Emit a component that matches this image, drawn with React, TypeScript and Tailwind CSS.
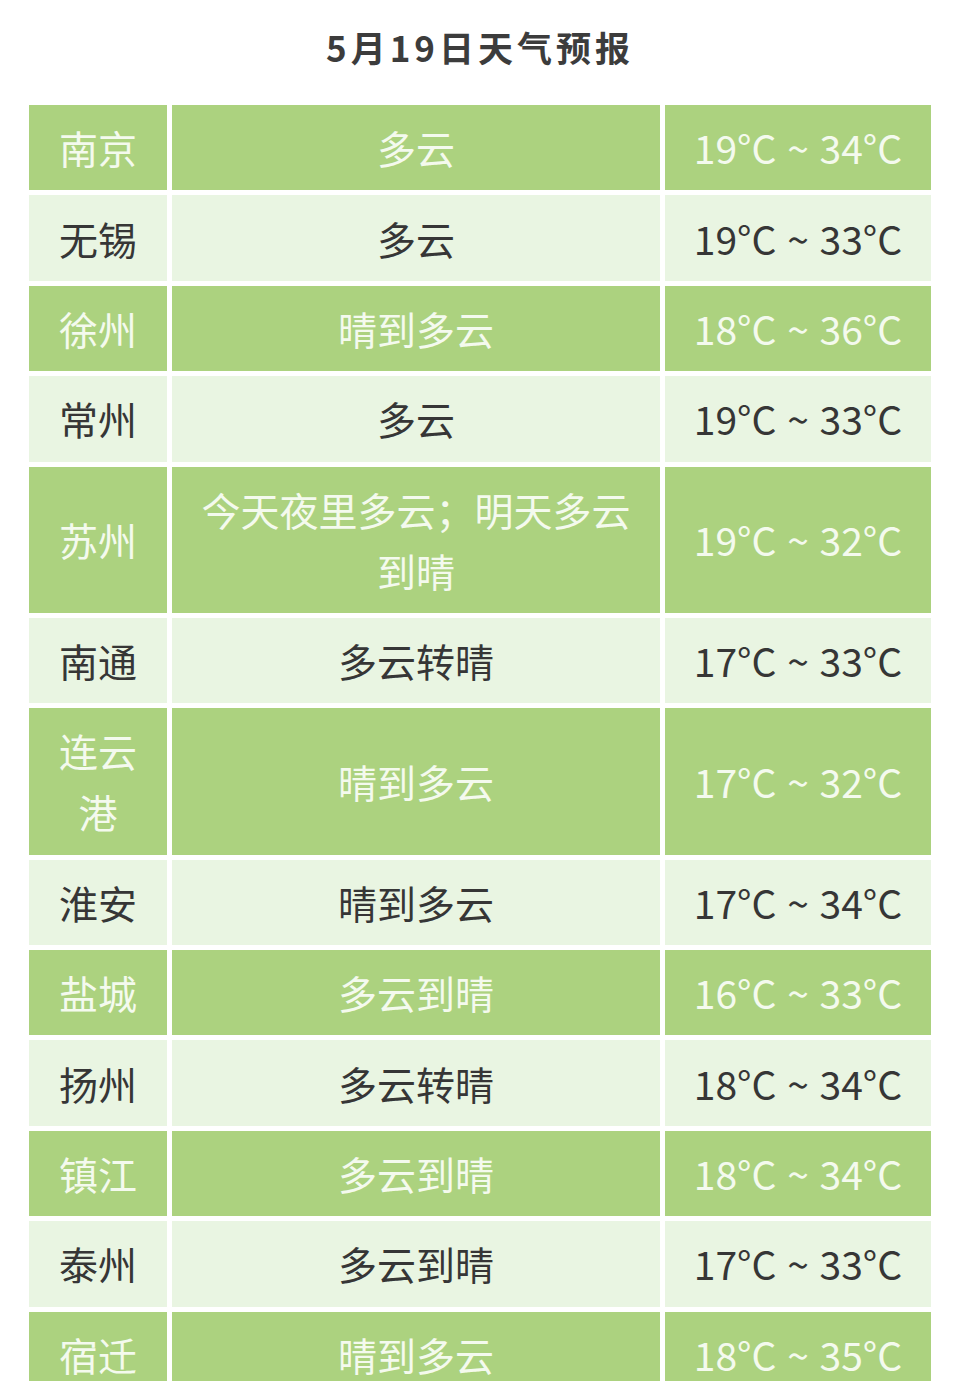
import React from 'react';

interface ForecastRow {
    city: string;
    weather: string;
    low: string;
    high: string;
}

// 江苏各市当日天气
const rows: ForecastRow[] = [
    { city: '南京', weather: '多云', low: '19°C', high: '34°C' },
    { city: '无锡', weather: '多云', low: '19°C', high: '33°C' },
    { city: '徐州', weather: '晴到多云', low: '18°C', high: '36°C' },
    { city: '常州', weather: '多云', low: '19°C', high: '33°C' },
    { city: '苏州', weather: '今天夜里多云；明天多云到晴', low: '19°C', high: '32°C' },
    { city: '南通', weather: '多云转晴', low: '17°C', high: '33°C' },
    { city: '连云港', weather: '晴到多云', low: '17°C', high: '32°C' },
    { city: '淮安', weather: '晴到多云', low: '17°C', high: '34°C' },
    { city: '盐城', weather: '多云到晴', low: '16°C', high: '33°C' },
    { city: '扬州', weather: '多云转晴', low: '18°C', high: '34°C' },
    { city: '镇江', weather: '多云到晴', low: '18°C', high: '34°C' },
    { city: '泰州', weather: '多云到晴', low: '17°C', high: '33°C' },
    { city: '宿迁', weather: '晴到多云', low: '18°C', high: '35°C' },
];

const Cell: React.FC<{ dark: boolean; children: React.ReactNode }> = ({ dark, children }) => (
    <div
        className={
            dark
                ? 'flex items-center justify-center text-center px-[20px] py-[12.2px] bg-[#acd27f] text-[#f4faee]'
                : 'flex items-center justify-center text-center px-[20px] py-[12.2px] bg-[#e9f5e2] text-[#363636]'
        }
    >
        {children}
    </div>
);

export default function App() {
    return (
        <div
            className="w-[960px] h-[1381px] overflow-hidden bg-white"
            style={{ fontFamily: '"Noto Sans CJK SC", "Noto Sans", sans-serif' }}
        >
            <h1 className="pt-[22px] h-[105px] text-center text-[35px] leading-[50px] font-bold tracking-[4px] text-[#3c3c3c]">
                5月19日天气预报
            </h1>

            {/* 表格：三列，白色间隔 */}
            <div className="mx-auto w-[902px] grid grid-cols-[138px_488px_266px] gap-[5px] text-[39px] leading-[61px]">
                {rows.map((row, i) => {
                    const dark = i % 2 === 0;
                    return (
                        <React.Fragment key={row.city}>
                            <Cell dark={dark}>{row.city}</Cell>
                            <Cell dark={dark}>{row.weather}</Cell>
                            <Cell dark={dark}>
                                <span className="whitespace-nowrap">
                                    {row.low} <span className="mx-[2px]">~</span> {row.high}
                                </span>
                            </Cell>
                        </React.Fragment>
                    );
                })}
            </div>
        </div>
    );
}
